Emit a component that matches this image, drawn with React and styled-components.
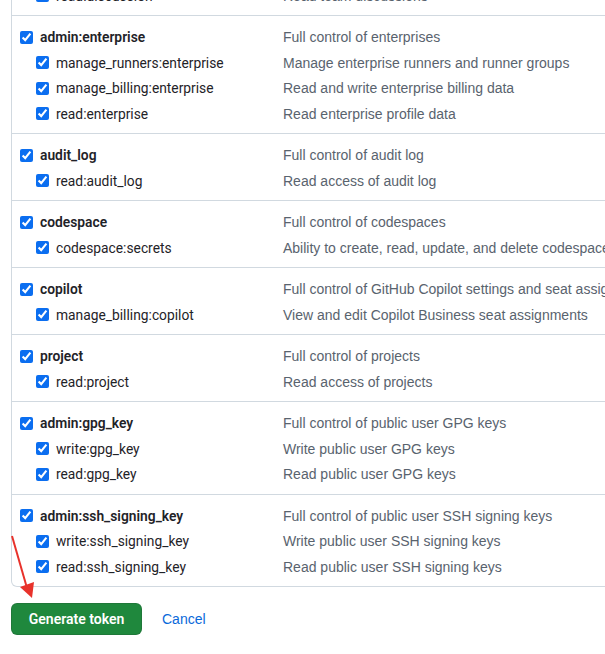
import React from 'react'
import styled, { createGlobalStyle } from 'styled-components'

const GlobalStyle = createGlobalStyle`
  body {
    margin: 0;
    overflow: hidden;
    background: #fff;
    font-family: "Segoe UI", "Liberation Sans", "Noto Sans", sans-serif;
    font-size: 14px;
    color: #1f2328;
  }
  * {
    box-sizing: border-box;
  }
`

const Page = styled.div`
  position: relative;
  margin-top: -25.5px;
  padding-left: 11px;
`

const ScopeBox = styled.div`
  width: 760px;
  border: 1px solid #d1d9e0;
  border-top: none;
  border-radius: 0 0 6px 6px;
`

const Group = styled.div`
  padding: 8px 0 7px 8px;
  & + & {
    border-top: 1px solid #d1d9e0;
  }
`

const Row = styled.div`
  display: grid;
  grid-template-columns: 263px 1fr;
  align-items: center;
  height: 25.5px;
  padding-top: 1px;
  white-space: nowrap;
`

const Label = styled.label`
  display: flex;
  align-items: center;
  gap: 7px;
  padding-left: ${p => (p.$sub ? '16px' : '0')};
  font-family: Roboto, "Liberation Sans", sans-serif;
  font-size: 13.8px;
  font-weight: ${p => (p.$sub ? 400 : 600)};
  color: #1f2328;
`

const Check = styled.input`
  margin: 0;
  width: 13px;
  height: 13px;
  accent-color: #0b6ef0;
`

const Desc = styled.span`
  color: #59636e;
`

const Actions = styled.div`
  display: flex;
  align-items: center;
  gap: 20px;
  margin-top: 16px;
`

const Button = styled.button`
  width: 131px;
  height: 32px;
  border: 1px solid rgba(31, 35, 40, 0.15);
  border-radius: 6px;
  background: #1f883d;
  color: #fff;
  font: 600 14px Roboto, "Liberation Sans", sans-serif;
  padding: 0;
`

const CancelLink = styled.a`
  color: #0969da;
  font-size: 14px;
  text-decoration: none;
`

const Arrow = styled.svg`
  position: absolute;
  left: 0;
  top: 25.5px;
  pointer-events: none;
`

const groups = [
  [['read:discussion', 'Read team discussions', true]],
  [
    ['admin:enterprise', 'Full control of enterprises'],
    ['manage_runners:enterprise', 'Manage enterprise runners and runner groups', true],
    ['manage_billing:enterprise', 'Read and write enterprise billing data', true],
    ['read:enterprise', 'Read enterprise profile data', true],
  ],
  [
    ['audit_log', 'Full control of audit log'],
    ['read:audit_log', 'Read access of audit log', true],
  ],
  [
    ['codespace', 'Full control of codespaces'],
    ['codespace:secrets', 'Ability to create, read, update, and delete codespace secrets', true],
  ],
  [
    ['copilot', 'Full control of GitHub Copilot settings and seat assignments'],
    ['manage_billing:copilot', 'View and edit Copilot Business seat assignments', true],
  ],
  [
    ['project', 'Full control of projects'],
    ['read:project', 'Read access of projects', true],
  ],
  [
    ['admin:gpg_key', 'Full control of public user GPG keys'],
    ['write:gpg_key', 'Write public user GPG keys', true],
    ['read:gpg_key', 'Read public user GPG keys', true],
  ],
  [
    ['admin:ssh_signing_key', 'Full control of public user SSH signing keys'],
    ['write:ssh_signing_key', 'Write public user SSH signing keys', true],
    ['read:ssh_signing_key', 'Read public user SSH signing keys', true],
  ],
]

const App = () => (
  <>
    <GlobalStyle />
    <Page>
      <ScopeBox>
        {groups.map((rows, i) => (
          <Group key={i}>
            {rows.map(([name, desc, sub]) => (
              <Row key={name}>
                <Label $sub={sub}>
                  <Check type="checkbox" checked readOnly />
                  {name}
                </Label>
                <Desc>{desc}</Desc>
              </Row>
            ))}
          </Group>
        ))}
      </ScopeBox>
      <Actions>
        <Button>Generate token</Button>
        <CancelLink href="#">Cancel</CancelLink>
      </Actions>
      <Arrow width="60" height="654" viewBox="0 0 60 654">
        <line x1="12" y1="536" x2="27" y2="588" stroke="#e8322b" strokeWidth="2" />
        <polygon points="20,587 34,582 32,598" fill="#e8322b" />
      </Arrow>
    </Page>
  </>
)

export default App
